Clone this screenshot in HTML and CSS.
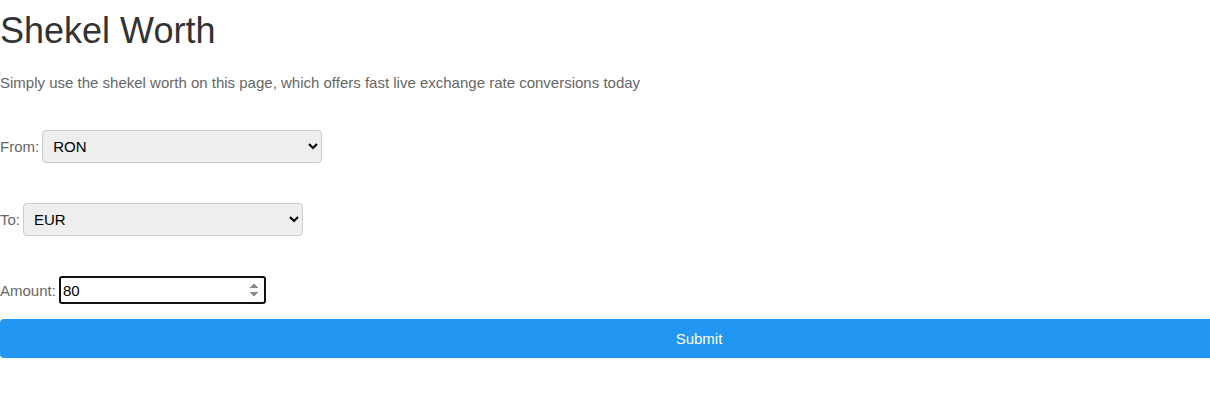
FILE: index.html
```html
<!DOCTYPE html>
<html lang="en">
<head>
<meta charset="utf-8">
<title>Shekel Worth</title>
<link rel="stylesheet" href="styles.css">
</head>
<body>
<div class="page">
  <h1 class="title">Shekel Worth</h1>
  <p class="intro">Simply use the shekel worth on this page, which offers fast live exchange rate conversions today</p>
  <form class="converter">
    <div class="row row-from">
      <label class="label" for="from">From:</label>
      <select id="from" class="select">
        <option>RON</option>
        <option>EUR</option>
        <option>USD</option>
        <option>ILS</option>
      </select>
    </div>
    <div class="row row-to">
      <label class="label" for="to">To:</label>
      <select id="to" class="select">
        <option>EUR</option>
        <option>RON</option>
        <option>USD</option>
        <option>ILS</option>
      </select>
    </div>
    <div class="row row-amount">
      <label class="label" for="amount">Amount:</label>
      <input id="amount" class="amount" type="number" value="80" autofocus>
    </div>
    <button type="button" class="submit">Submit</button>
  </form>
</div>
</body>
</html>
```

FILE: styles.css
```css
html, body {
  margin: 0;
  padding: 0;
  background: #fff;
  overflow-x: hidden;
}
body {
  font-family: "Liberation Sans", Arial, sans-serif;
  color: #333;
}
.page {
  display: flex;
  flex-direction: column;
}
.title {
  font-size: 36px;
  font-weight: normal;
  color: #333;
  margin: 10px 0 0 0;
  line-height: 41px;
}
.intro {
  font-size: 15px;
  color: #666;
  margin: 22px 0 0 0;
  line-height: 20px;
}
.converter {
  display: flex;
  flex-direction: column;
  margin-top: 37px;
}
.row {
  display: flex;
  align-items: center;
  gap: 3px;
}
.row-to {
  margin-top: 40px;
}
.row-amount {
  margin-top: 40px;
}
.label {
  font-size: 15px;
  color: #666;
}
.select {
  width: 280px;
  height: 33px;
  font-family: "Liberation Sans", Arial, sans-serif;
  font-size: 15px;
  color: #000;
  background-color: #eee;
  border: 1px solid #ccc;
  border-radius: 4px;
  padding: 0 6px;
}
.amount {
  width: 207px;
  height: 28px;
  box-sizing: border-box;
  font-family: "Liberation Sans", Arial, sans-serif;
  font-size: 15px;
  color: #000;
  padding: 1px 2px;
}
.submit {
  margin-top: 15px;
  width: calc(100% + 188px);
  flex: none;
  align-self: flex-start;
  height: 39px;
  border: none;
  border-radius: 4px;
  background: #2196f3;
  color: #fff;
  font-family: "Liberation Sans", Arial, sans-serif;
  font-size: 15px;
}
```
